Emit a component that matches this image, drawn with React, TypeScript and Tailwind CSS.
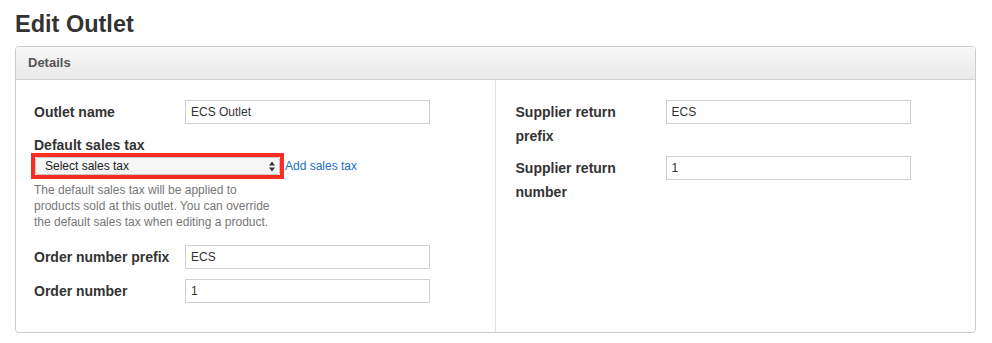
import React from 'react';

const font = { fontFamily: '"Liberation Sans", Arial, Helvetica, sans-serif' };

interface FieldRowProps {
    label: string;
    value: string;
    className?: string;
}

const FieldRow: React.FC<FieldRowProps> = ({ label, value, className = '' }) => (
    <div className={`flex items-center ${className}`}>
        <label className="w-[151px] shrink-0 text-[14px] font-bold leading-5 text-[#333]">{label}</label>
        <input
            readOnly
            value={value}
            className="w-[245px] h-6 border border-[#cfcfcf] bg-white px-[5px] text-[12px] text-[#333] outline-none"
        />
    </div>
);

const WrapRow: React.FC<FieldRowProps> = ({ label, value, className = '' }) => (
    <div className={`flex items-start ${className}`}>
        <label className="w-[120px] mr-[30px] shrink-0 text-[14px] font-bold leading-6 text-[#333]">{label}</label>
        <input
            readOnly
            value={value}
            className="w-[245px] h-6 border border-[#cfcfcf] bg-white px-[5px] text-[12px] text-[#333] outline-none"
        />
    </div>
);

export default function App() {
    return (
        <div className="min-h-screen bg-white px-[15px] pb-[10px]" style={font}>
            <h1 className="pt-[10px] mb-2 text-[23.5px] font-bold leading-7 text-[#333]">Edit Outlet</h1>

            <div className="w-[961px] rounded-[4px] border border-[#cbcbcb] overflow-hidden">
                <div className="h-[33px] flex items-center px-3 border-b border-[#d3d3d3] bg-gradient-to-b from-[#f8f8f8] to-[#e9e9e9]">
                    <span className="text-[13px] font-bold text-[#555]">Details</span>
                </div>

                <div className="grid grid-cols-2">
                    {/* left column */}
                    <div className="pl-[18px] pr-5 pt-5 pb-[29px] border-r border-[#e2e2e2]">
                        <FieldRow label="Outlet name" value="ECS Outlet" />

                        <div className="mt-[13px]">
                            <div className="text-[14px] font-bold leading-4 text-[#333]">Default sales tax</div>
                            <div className="flex items-center">
                                <div className="-ml-[3px] w-[253px] h-[26px] border-4 border-[#fa2d22] bg-white">
                                    <div className="relative h-full border border-[#c9c9c9] bg-[#f6f6f6] rounded-[2px]">
                                        <span className="absolute left-[9px] top-0 leading-[16px] text-[12px] text-[#222]">Select sales tax</span>
                                        <svg className="absolute right-[4px] top-[3px]" width="6" height="11" viewBox="0 0 6 11">
                                            <path d="M0 4.5 L3 0.5 L6 4.5 Z" fill="#333" />
                                            <path d="M0 6.5 L3 10.5 L6 6.5 Z" fill="#333" />
                                        </svg>
                                    </div>
                                </div>
                                <a href="#" className="ml-px text-[12px] text-[#1b6fc5]">Add sales tax</a>
                            </div>
                            <p className="mt-[3px] w-[245px] text-[12px] leading-4 text-[#777]">
                                The default sales tax will be applied to products sold at this outlet. You can override the default sales tax when editing a product.
                            </p>
                        </div>

                        <FieldRow className="mt-[15px]" label="Order number prefix" value="ECS" />
                        <FieldRow className="mt-[10px]" label="Order number" value="1" />
                    </div>

                    {/* right column */}
                    <div className="pl-5 pr-5 pt-5 pb-5">
                        <WrapRow label="Supplier return prefix" value="ECS" />
                        <WrapRow className="mt-2" label="Supplier return number" value="1" />
                    </div>
                </div>
            </div>
        </div>
    );
}
